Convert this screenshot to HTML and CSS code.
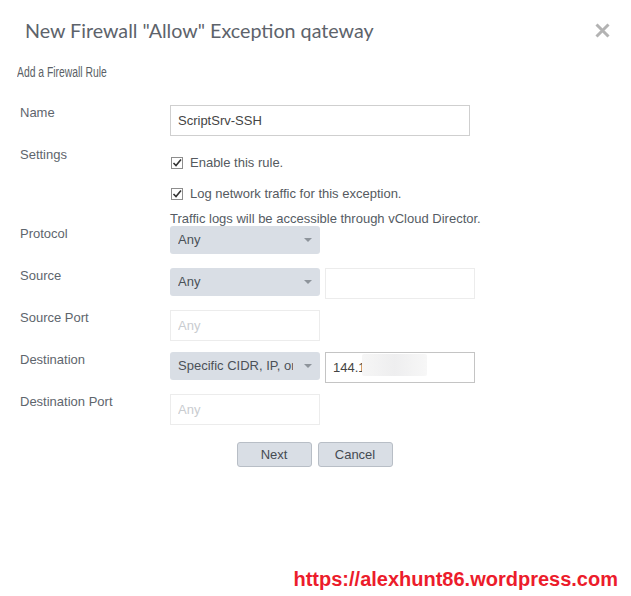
FILE: index.html
```html
<!DOCTYPE html>
<html lang="en">
<head>
    <meta charset="UTF-8">
    <meta name="viewport" content="width=device-width, initial-scale=1.0">
    <title>New Firewall Rule</title>
    <link rel="stylesheet" href="styles.css">
</head>
<body>

    <div class="dialog">
        <div class="dialog-head">
            <h1>New Firewall "Allow" Exception qateway</h1>
            <span class="close" title="Close">
                <svg width="15" height="15" viewBox="0 0 15 15">
                    <path d="M1.5 1.5 L13.5 13.5 M13.5 1.5 L1.5 13.5" stroke="#b3b3b3" stroke-width="3" fill="none"/>
                </svg>
            </span>
        </div>

        <h2 class="subtitle"><span>Add a Firewall Rule</span></h2>

        <div class="rule-form">
            <div class="row">
                <div class="label">Name</div>
                <div class="field">
                    <input class="text-input wide" type="text" value="ScriptSrv-SSH" readonly>
                </div>
            </div>

            <div class="row settings">
                <div class="label">Settings</div>
                <div class="field checks">
                    <div class="check">
                        <svg class="box" width="12" height="12" viewBox="0 0 12 12">
                            <rect x="0.5" y="0.5" width="11" height="11" fill="#fff" stroke="#8d8d8d"/>
                            <path d="M2.5 6 L5 8.5 L10 2.5" stroke="#333" stroke-width="1.6" fill="none"/>
                        </svg>
                        Enable this rule.
                    </div>
                    <div class="check second">
                        <svg class="box" width="12" height="12" viewBox="0 0 12 12">
                            <rect x="0.5" y="0.5" width="11" height="11" fill="#fff" stroke="#8d8d8d"/>
                            <path d="M2.5 6 L5 8.5 L10 2.5" stroke="#333" stroke-width="1.6" fill="none"/>
                        </svg>
                        Log network traffic for this exception.
                    </div>
                    <div class="note">Traffic logs will be accessible through vCloud Director.</div>
                </div>
            </div>

            <div class="row">
                <div class="label">Protocol</div>
                <div class="field">
                    <div class="select"><span>Any</span><i class="caret"></i></div>
                </div>
            </div>

            <div class="row">
                <div class="label">Source</div>
                <div class="field">
                    <div class="select"><span>Any</span><i class="caret"></i></div>
                    <input class="text-input faint" type="text" readonly>
                </div>
            </div>

            <div class="row">
                <div class="label">Source Port</div>
                <div class="field">
                    <input class="text-input faint" type="text" placeholder="Any" readonly>
                </div>
            </div>

            <div class="row">
                <div class="label">Destination</div>
                <div class="field">
                    <div class="select"><span>Specific CIDR, IP, or IP Range</span><i class="caret"></i></div>
                    <div class="ip-box">
                        <input class="text-input dark" type="text" value="144.1" readonly>
                        <span class="blur"></span>
                    </div>
                </div>
            </div>

            <div class="row">
                <div class="label">Destination Port</div>
                <div class="field">
                    <input class="text-input faint" type="text" placeholder="Any" readonly>
                </div>
            </div>
        </div>

        <div class="actions">
            <button class="btn">Next</button>
            <button class="btn">Cancel</button>
        </div>
    </div>

    <div class="watermark">https://alexhunt86.wordpress.com</div>

</body>
</html>
```

FILE: styles.css
```css
body {
    margin: 0;
    background-color: #fff;
    font-family: 'Liberation Sans', Arial, sans-serif;
    font-size: 13px;
    color: #555c64;
}

.dialog {
    width: 631px;
}

.dialog-head {
    display: flex;
    justify-content: space-between;
    align-items: flex-start;
    padding: 19px 21px 0 25px;
}

.dialog-head h1 {
    margin: 0;
    font-family: Lato, 'Open Sans', sans-serif;
    font-weight: normal;
    font-size: 19.7px;
    line-height: 23px;
    color: #5d636b;
}

.close {
    display: block;
    width: 15px;
    height: 15px;
    margin-top: 4px;
    cursor: pointer;
}

.subtitle {
    margin: 23px 0 0 17px;
    font-size: 14px;
    font-weight: normal;
    line-height: 15px;
    color: #5a5f66;
}

.subtitle span {
    display: inline-block;
    transform: scaleX(0.74);
    transform-origin: left center; /* narrow face in the original */
}

.rule-form {
    margin-top: 25px;
    padding-left: 20px;
}

.row {
    display: grid;
    grid-template-columns: 150px 1fr;
    height: 42px;
}

.row.settings {
    height: 79px;
}

.label {
    line-height: 15px;
    color: #5e656d;
}

.field {
    display: flex;
    align-items: flex-start;
    gap: 5px;
}

.text-input {
    box-sizing: border-box;
    width: 150px;
    height: 31px;
    margin: 0;
    padding: 0 7px;
    border: 1px solid #ececec;
    border-radius: 0;
    font-family: inherit;
    font-size: 13px;
    color: #444;
    background: #fff;
    outline: none;
}

.text-input.wide {
    width: 300px;
    border-color: #cfcfcf;
}

.text-input.dark {
    border-color: #c4c4c4;
}

.text-input::placeholder {
    color: #c9ccd0;
}

.checks {
    flex-direction: column;
    gap: 0;
    padding-top: 8px;
}

.check {
    display: flex;
    align-items: center;
    gap: 7px;
    line-height: 15px;
    padding-left: 1px;
    color: #555a60;
}

.check.second {
    margin-top: 16px;
}

.note {
    margin-top: 10px;
    line-height: 15px;
    color: #555c64;
}

.select {
    position: relative;
    box-sizing: border-box;
    width: 150px;
    height: 28px;
    padding: 0 27px 0 8px;
    background-color: #d9dee5;
    border-radius: 3px;
    line-height: 28px;
    color: #4b5158;
    white-space: nowrap;
    overflow: hidden;
}

.select span {
    display: block;
    overflow: hidden;
}

.caret {
    position: absolute;
    right: 8px;
    top: 12px;
    width: 0;
    height: 0;
    border-left: 4px solid transparent;
    border-right: 4px solid transparent;
    border-top: 4px solid #8e949b;
}

.ip-box {
    position: relative;
}

.blur {
    position: absolute;
    left: 37px;
    top: 2px;
    width: 65px;
    height: 22px;
    background: linear-gradient(90deg, #f6f6f6, #eeeeef 50%, #f7f7f7);
    border-radius: 2px;
}

.actions {
    display: flex;
    justify-content: center;
    gap: 6px;
    margin-top: 6px;
    padding-right: 2px;
}

.btn {
    box-sizing: border-box;
    width: 75px;
    height: 25px;
    padding: 0;
    border: 1px solid #b8bec6;
    border-radius: 3px;
    background-color: #d9dee5;
    font-family: inherit;
    font-size: 13px;
    color: #454b52;
    cursor: pointer;
}

.watermark {
    margin-top: 101px;
    padding-right: 13px;
    text-align: right;
    font-family: 'Liberation Sans', Arial, sans-serif;
    font-weight: bold;
    font-size: 20px;
    line-height: 23px;
    color: #ec1c2b;
}
```
